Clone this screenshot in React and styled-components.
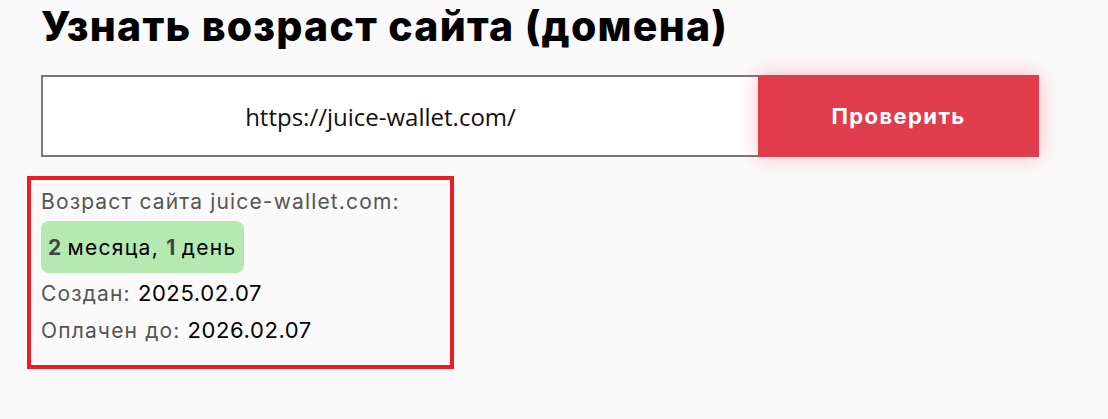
import React, { useState } from 'react';
import styled, { createGlobalStyle } from 'styled-components';

const GlobalStyle = createGlobalStyle`
    html, body {
        margin: 0;
        padding: 0;
        background: #fafafa;
        font-family: Inter, "Noto Sans", sans-serif;
    }
`

const Page = styled.div`
    padding: 0 0 0 41px;
    width: 998px;
`

const Titulo = styled.h1`
    margin: 0;
    height: 66px;
    font-size: 41px;
    line-height: 52px;
    font-weight: 800;
    color: #000;
    letter-spacing: 1.25px;
`

const Form = styled.form`
    display: flex;
    height: 82px;
    margin-top: 9px;
`

const Campo = styled.input`
    box-sizing: border-box;
    width: 717px;
    height: 82px;
    border: 2px solid #777;
    border-right: none;
    padding: 0 40px 0 0;
    background: #fff;
    text-align: center;
    font-family: "Open Sans", sans-serif;
    font-size: 24px;
    color: #111;
    outline: none;
`

const Botao = styled.button`
    width: 281px;
    height: 82px;
    border: none;
    background: #e03c4c;
    color: #fff;
    font-family: Inter, sans-serif;
    font-weight: 700;
    font-size: 22px;
    letter-spacing: 1.4px;
    box-shadow: 0 0 20px rgba(240, 70, 80, 0.35);
    cursor: pointer;
`

const Resultado = styled.div`
    box-sizing: border-box;
    width: 427px;
    height: 193px;
    margin: 19px 0 0 -14px;
    border: 4px solid #ed1c24;
    padding: 3px 10px 0 10px;
    display: flex;
    flex-direction: column;
    align-items: flex-start;
`

const Linha = styled.div`
    font-size: 21px;
    line-height: 37px;
    letter-spacing: 1.15px;
    color: #555;
    white-space: nowrap;
`

const Valor = styled.span`
    color: #000;
    font-size: 22px;
    letter-spacing: 0.6px;
`

const Selo = styled.div`
    background: #b4eab0;
    border-radius: 8px;
    height: 52px;
    padding: 0 8px 0 7px;
    display: flex;
    align-items: center;
    font-size: 21px;
    letter-spacing: 1.3px;
    color: #000;
    margin: 1px 0 2px;
`

const Numero = styled.b`
    color: #444;
    font-weight: 700;
    margin-right: 5px;
`

const App = () => {
    const [url, setUrl] = useState('https://juice-wallet.com/')

    return (
        <Page>
            <GlobalStyle />
            <Titulo>Узнать возраст сайта (домена)</Titulo>
            <Form onSubmit={(e) => e.preventDefault()}>
                <Campo value={url} onChange={(e) => setUrl(e.target.value)} />
                <Botao type="submit">Проверить</Botao>
            </Form>
            <Resultado>
                <Linha>Возраст сайта juice-wallet.com:</Linha>
                <Selo>
                    <Numero>2</Numero>месяца,&nbsp;<Numero>1</Numero>день
                </Selo>
                <Linha>Создан: <Valor>2025.02.07</Valor></Linha>
                <Linha>Оплачен до: <Valor>2026.02.07</Valor></Linha>
            </Resultado>
        </Page>
    )
}

export default App;
